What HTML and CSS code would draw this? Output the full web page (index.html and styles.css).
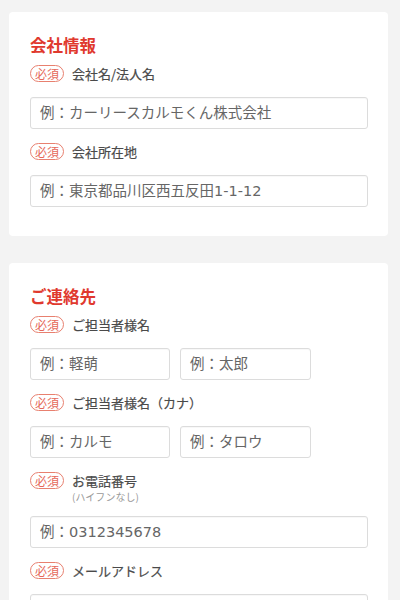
FILE: index.html
```html
<!DOCTYPE html>
<html lang="ja">
<head>
<meta charset="utf-8">
<link rel="stylesheet" href="styles.css">
</head>
<body>
<div class="page">
  <section class="card">
    <h2 class="title">会社情報</h2>
    <div class="field">
      <div class="label-row"><span class="badge">必須</span><span class="label">会社名/法人名</span></div>
      <div class="inputs"><div class="input full">例：カーリースカルモくん株式会社</div></div>
    </div>
    <div class="field">
      <div class="label-row"><span class="badge">必須</span><span class="label">会社所在地</span></div>
      <div class="inputs"><div class="input full">例：東京都品川区西五反田1-1-12</div></div>
    </div>
  </section>
  <section class="card">
    <h2 class="title">ご連絡先</h2>
    <div class="field">
      <div class="label-row"><span class="badge">必須</span><span class="label">ご担当者様名</span></div>
      <div class="inputs"><div class="input last">例：軽萌</div><div class="input first">例：太郎</div></div>
    </div>
    <div class="field">
      <div class="label-row"><span class="badge">必須</span><span class="label">ご担当者様名（カナ）</span></div>
      <div class="inputs"><div class="input last">例：カルモ</div><div class="input first">例：タロウ</div></div>
    </div>
    <div class="field">
      <div class="label-row"><span class="badge">必須</span><span class="label">お電話番号</span></div>
      <div class="sub">(ハイフンなし)</div>
      <div class="inputs sub-after"><div class="input full">例：0312345678</div></div>
    </div>
    <div class="field">
      <div class="label-row"><span class="badge">必須</span><span class="label">メールアドレス</span></div>
      <div class="inputs"><div class="input full"></div></div>
    </div>
  </section>
</div>
</body>
</html>
```
FILE: styles.css
```css
html, body {
  margin: 0;
  padding: 0;
  background: #f3f3f3;
  font-family: "Noto Sans CJK JP", "Noto Sans", sans-serif;
}
.page {
  padding: 12px 12px 0 9px;
  display: flex;
  flex-direction: column;
  gap: 27px;
}
.card {
  width: 379px;
  box-sizing: border-box;
  background: #fff;
  border-radius: 4px;
  padding: 21px 20px 29px 21px;
}
.title {
  margin: 0;
  font-size: 16.5px;
  line-height: 24px;
  font-weight: 700;
  color: #e0392e;
}
.field {
  margin-top: 12px;
}
.title + .field {
  margin-top: 6px;
}
.label-row {
  display: flex;
  align-items: center;
  height: 20px;
  gap: 8px;
}
.badge {
  box-sizing: border-box;
  width: 34px;
  height: 17px;
  border: 1px solid #e8806f;
  border-radius: 9px;
  color: #e5685a;
  font-size: 12px;
  line-height: 15px;
  text-align: center;
  font-weight: 400;
}
.label {
  font-size: 13px;
  color: #4a4a4a;
  font-weight: 400;
  -webkit-text-stroke: 0.2px #4a4a4a;
}
.sub {
  padding-left: 42px;
  font-size: 10px;
  line-height: 14px;
  color: #999;
}
.inputs {
  margin-top: 14px;
  display: flex;
  gap: 10px;
}
.inputs.sub-after {
  margin-top: 12px;
}
.input {
  box-sizing: border-box;
  height: 32px;
  border: 1px solid #dcdcdc;
  border-radius: 3px;
  padding: 0 9px;
  font-family: "DejaVu Sans", "Noto Sans CJK JP", sans-serif;
  font-size: 14.5px;
  line-height: 30px;
  color: #666;
  white-space: nowrap;
  box-shadow: inset 0 1px 1px rgba(0,0,0,0.03);
}
.input.full { width: 338px; }
.input.last { width: 140px; }
.input.first { width: 131px; }
```
